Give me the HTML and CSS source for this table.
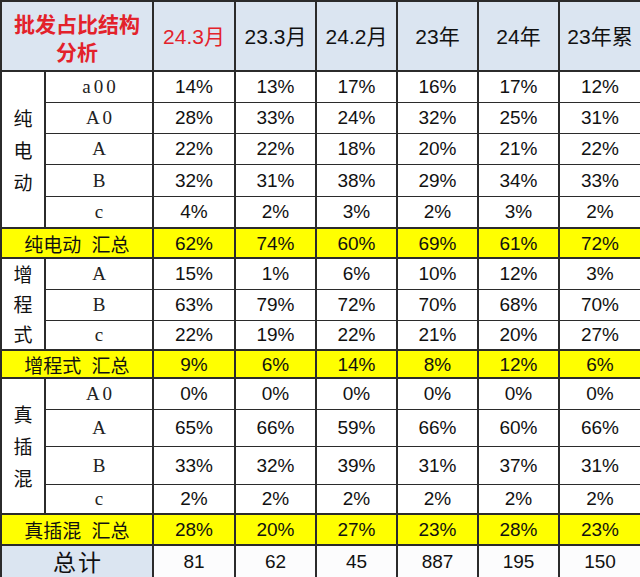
FILE: index.html
```html
<!DOCTYPE html>
<html lang="zh">
<head>
<meta charset="utf-8">
<title>批发占比结构分析</title>
<link rel="stylesheet" href="styles.css">
</head>
<body>
<table class="sheet">
  <colgroup>
    <col class="c-grp"><col class="c-sub">
    <col class="c-d1"><col class="c-d"><col class="c-d"><col class="c-d"><col class="c-d"><col class="c-d1">
  </colgroup>
  <thead>
    <tr class="r-head">
      <th colspan="2" class="title">批发占比结构<br>分析</th>
      <th class="hl">24.3月</th>
      <th>23.3月</th>
      <th>24.2月</th>
      <th>23年</th>
      <th>24年</th>
      <th>23年累</th>
    </tr>
  </thead>
  <tbody>
    <tr class="r31">
      <td rowspan="5" class="grp"><span class="vt vt32">纯电动</span></td>
      <td class="sub">a00</td><td>14%</td><td>13%</td><td>17%</td><td>16%</td><td>17%</td><td>12%</td>
    </tr>
    <tr class="r31"><td class="sub">A0</td><td>28%</td><td>33%</td><td>24%</td><td>32%</td><td>25%</td><td>31%</td></tr>
    <tr class="r31"><td class="sub">A</td><td>22%</td><td>22%</td><td>18%</td><td>20%</td><td>21%</td><td>22%</td></tr>
    <tr class="r32"><td class="sub">B</td><td>32%</td><td>31%</td><td>38%</td><td>29%</td><td>34%</td><td>33%</td></tr>
    <tr class="r32"><td class="sub">c</td><td>4%</td><td>2%</td><td>3%</td><td>2%</td><td>3%</td><td>2%</td></tr>
    <tr class="r30 sum"><td colspan="2" class="sumlabel">纯电动 汇总</td><td>62%</td><td>74%</td><td>60%</td><td>69%</td><td>61%</td><td>72%</td></tr>

    <tr class="r31">
      <td rowspan="3" class="grp"><span class="vt vt29">增程式</span></td>
      <td class="sub">A</td><td>15%</td><td>1%</td><td>6%</td><td>10%</td><td>12%</td><td>3%</td>
    </tr>
    <tr class="r31"><td class="sub">B</td><td>63%</td><td>79%</td><td>72%</td><td>70%</td><td>68%</td><td>70%</td></tr>
    <tr class="r30"><td class="sub">c</td><td>22%</td><td>19%</td><td>22%</td><td>21%</td><td>20%</td><td>27%</td></tr>
    <tr class="r28 sum"><td colspan="2" class="sumlabel">增程式 汇总</td><td>9%</td><td>6%</td><td>14%</td><td>8%</td><td>12%</td><td>6%</td></tr>

    <tr class="r31">
      <td rowspan="4" class="grp"><span class="vt vt32">真插混</span></td>
      <td class="sub">A0</td><td>0%</td><td>0%</td><td>0%</td><td>0%</td><td>0%</td><td>0%</td>
    </tr>
    <tr class="r37"><td class="sub">A</td><td>65%</td><td>66%</td><td>59%</td><td>66%</td><td>60%</td><td>66%</td></tr>
    <tr class="r38"><td class="sub">B</td><td>33%</td><td>32%</td><td>39%</td><td>31%</td><td>37%</td><td>31%</td></tr>
    <tr class="r30"><td class="sub">c</td><td>2%</td><td>2%</td><td>2%</td><td>2%</td><td>2%</td><td>2%</td></tr>
    <tr class="r31 sum"><td colspan="2" class="sumlabel">真插混 汇总</td><td>28%</td><td>20%</td><td>27%</td><td>23%</td><td>28%</td><td>23%</td></tr>

    <tr class="r33 total"><td colspan="2" class="totlabel">总计</td><td>81</td><td>62</td><td>45</td><td>887</td><td>195</td><td>150</td></tr>
  </tbody>
</table>
</body>
</html>
```

FILE: styles.css
```css
html, body {
  margin: 0;
  padding: 0;
  background: #ffffff;
}

.sheet {
  border-collapse: collapse;
  table-layout: fixed;
  width: 640px;
  font-family: "Liberation Sans", Arial, "Noto Sans CJK SC", sans-serif;
  color: #111111;
}

.c-grp { width: 44px; }
.c-sub { width: 108px; }
.c-d1 { width: 82px; }
.c-d { width: 81px; }

.sheet th,
.sheet td {
  border: 2px solid #2b2b2b;
  padding: 0;
  text-align: center;
  vertical-align: middle;
  font-size: 19px;
  font-weight: 400;
  line-height: 1;
}

.sheet tbody tr > td {
  border-top-width: 1px;
  border-bottom-width: 1px;
}

.sheet tr.sum > td,
.sheet tr.total > td {
  border-top-width: 2px;
  border-bottom-width: 2px;
}

.r-head { height: 70px; }
.r-head th {
  background: #dbe5f1;
  font-size: 21px;
  color: #111111;
}
.r-head th.title {
  color: #e3222b;
  font-family: "Noto Sans CJK SC", sans-serif;
  font-weight: 700;
  font-size: 21px;
  line-height: 28px;
  padding-top: 2px;
}
.r-head th.hl { color: #e3222b; }

.r28 { height: 28px; }
.r30 { height: 30px; }
.r31 { height: 31px; }
.r32 { height: 32px; }
.r33 { height: 33px; }
.r37 { height: 37px; }
.r38 { height: 38px; }

.grp {
  font-family: "Noto Sans CJK SC", sans-serif;
  font-size: 23px;
  color: #111111;
}
.vt {
  display: block;
  width: 1em;
  margin: 0 auto;
  word-break: break-all;
}
.vt32 { line-height: 32px; }
.vt29 { line-height: 30px; }

.sub {
  font-family: "Liberation Serif", "Times New Roman", serif;
  font-size: 23px;
  letter-spacing: 3px;
  text-indent: 3px;
  color: #222222;
}

.sum > td { background: #ffff00; }
.sumlabel {
  font-family: "Noto Sans CJK SC", sans-serif;
  font-size: 22px;
  word-spacing: 6px;
}

.total > td { background: #fcfcfd; }
.total > td.totlabel {
  background: #dbe5f1;
  font-family: "Noto Sans CJK SC", sans-serif;
  font-size: 23px;
  letter-spacing: 2px;
  text-indent: 2px;
  font-weight: 400;
}
```
